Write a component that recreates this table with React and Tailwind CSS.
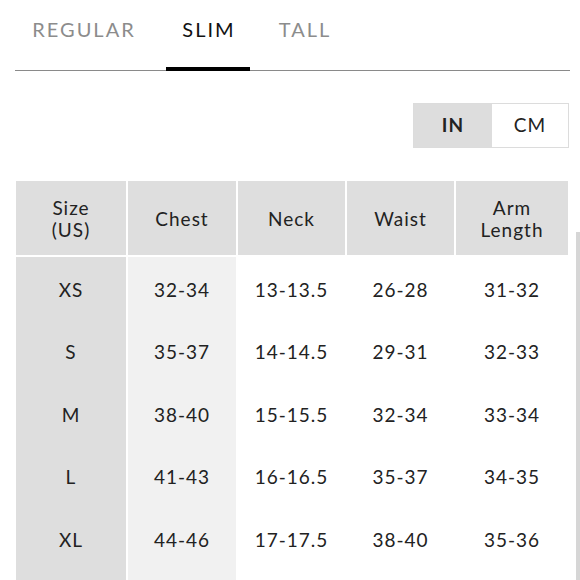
const tabs = [
  { label: "REGULAR", w: "w-[134px]" },
  { label: "SLIM", w: "ml-[16px] w-[84px]" },
  { label: "TALL", w: "ml-[14px] w-[80px]" },
];
const cols = ["Size\n(US)", "Chest", "Neck", "Waist", "Arm\nLength"];
const rows = [
  ["XS", "32-34", "13-13.5", "26-28", "31-32"],
  ["S", "35-37", "14-14.5", "29-31", "32-33"],
  ["M", "38-40", "15-15.5", "32-34", "33-34"],
  ["L", "41-43", "16-16.5", "35-37", "34-35"],
  ["XL", "44-46", "17-17.5", "38-40", "35-36"],
];

const grid = "grid grid-cols-[110px_108px_107px_107px_112px] gap-x-[2px]";

export default function App() {
  return (
    <div className="relative h-[580px] w-[580px] overflow-hidden bg-white font-['Lato',sans-serif] text-[#222]">
      {/* tabs */}
      <div className="ml-[15px] mr-[10px] flex h-[71px] border-b border-[#8a8a8a] pl-px">
        {tabs.map((t) => (
          <div
            key={t.label}
            className={
              "relative flex justify-center pl-[2px] pt-[14px] text-[20px] tracking-[2px] " +
              t.w +
              " " +
              (t.label === "SLIM" ? "text-[#111]" : "text-[#8c8c8c]")
            }
          >
            {t.label}
            {t.label === "SLIM" && (
              <div className="absolute bottom-[-1px] left-0 right-0 h-[4px] bg-black" />
            )}
          </div>
        ))}
      </div>

      {/* unit toggle */}
      <div className="mr-[11px] mt-[32px] flex justify-end">
        <div className="flex h-[45px] border border-[#dcdcdc] text-[19px]">
          <div className="flex w-[78px] items-center justify-center bg-[#dddddd] font-bold tracking-[1px]">
            IN
          </div>
          <div className="flex w-[76px] items-center justify-center bg-white tracking-[1px]">
            CM
          </div>
        </div>
      </div>

      {/* table */}
      <div className="ml-[16px] mt-[33px]">
        <div className={grid}>
          {cols.map((c) => (
            <div
              key={c}
              className="flex h-[74px] items-center justify-center whitespace-pre-line bg-[#dedede] pt-[2px] text-center text-[19px] leading-[22px] tracking-[1px]"
            >
              {c}
            </div>
          ))}
        </div>
        <div className={grid + " mt-[2px]"}>
          {rows.map((r) =>
            r.map((v, i) => (
              <div
                key={r[0] + i}
                className={
                  "flex h-[62.5px] items-center justify-center pt-[3px] text-[19px] tracking-[1px] " +
                  (i === 0 ? "bg-[#dedede]" : i === 1 ? "bg-[#f1f1f1]" : "bg-white")
                }
              >
                {v}
              </div>
            ))
          )}
          <div className="h-[40px] bg-[#dedede]" />
          <div className="h-[40px] bg-[#f1f1f1]" />
        </div>
      </div>

      {/* scrollbar */}
      <div className="absolute right-0 top-[232px] h-[348px] w-[4px] bg-[#d6d6d6]" />
    </div>
  );
}
